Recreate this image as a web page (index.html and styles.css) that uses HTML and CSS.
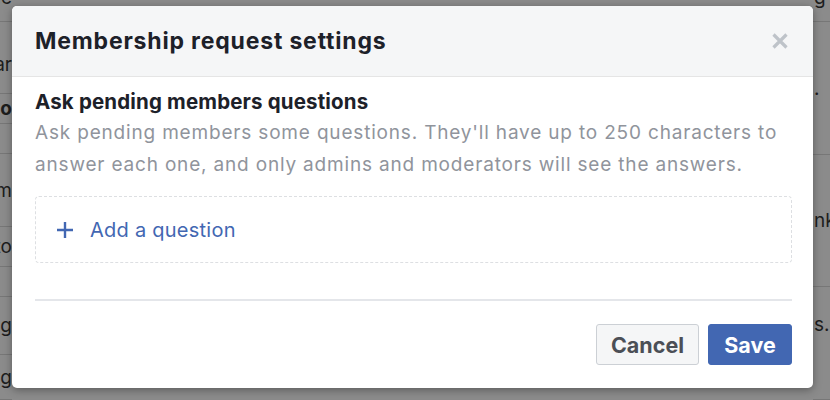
FILE: index.html
```html
<!DOCTYPE html>
<html lang="en">
<head>
<meta charset="utf-8">
<title>Membership request settings</title>
<link rel="stylesheet" href="styles.css">
</head>
<body>
<div class="page">
  <div class="strip strip-left">
    <div class="bg-row h22"><span>people</span></div>
    <div class="bg-row h72 bottom"><span>Clear</span></div>
    <div class="bg-row h30 bottom"><span class="bold">Hello</span></div>
    <div class="bg-row h30"><span></span></div>
    <div class="bg-row h73 bottom"><span>Lorem</span></div>
    <div class="bg-row h40"><span>Auto</span></div>
    <div class="bg-row h30"><span></span></div>
    <div class="bg-row h58 bottom"><span>Add g</span></div>
    <div class="bg-row h45 bottom"><span>Setting</span></div>
  </div>
  <div class="middle"></div>
  <div class="strip strip-right">
    <div class="bg-row h22"><span>g</span></div>
    <div class="bg-row h133"><span>.</span></div>
    <div class="bg-row h132"><span>nk</span></div>
    <div class="bg-row h113 bottom"><span>s.</span></div>
  </div>
</div>

<div class="dialog" role="dialog" aria-labelledby="dlg-title">
  <div class="dlg-head">
    <h2 id="dlg-title" class="dlg-title">Membership request settings</h2>
    <button class="close-btn" aria-label="Close">
      <svg width="16" height="16" viewBox="0 0 16 16" aria-hidden="true">
        <path d="M1.5 1.5 L14.5 14.5 M14.5 1.5 L1.5 14.5" stroke="#bec3c9" stroke-width="3.2" stroke-linecap="butt" fill="none"/>
      </svg>
    </button>
  </div>
  <div class="dlg-body">
    <h3 class="section-title">Ask pending members questions</h3>
    <p class="section-desc">Ask pending members some questions. They'll have up to 250 characters to answer each one, and only admins and moderators will see the answers.</p>
    <div class="add-box">
      <svg class="plus" width="18" height="18" viewBox="0 0 18 18" aria-hidden="true">
        <path d="M9 1 V17 M1 9 H17" stroke="#4267b2" stroke-width="2.4" fill="none"/>
      </svg>
      <span class="add-label">Add a question</span>
    </div>
  </div>
  <div class="dlg-foot">
    <button class="btn btn-cancel">Cancel</button>
    <button class="btn btn-save">Save</button>
  </div>
</div>
</body>
</html>
```

FILE: styles.css
```css
* { box-sizing: border-box; }

html, body {
  margin: 0;
  padding: 0;
  width: 830px;
  height: 400px;
  overflow: hidden;
  background: #8b8b8b;
  font-family: Inter, "Liberation Sans", Arial, sans-serif;
}

.page {
  display: flex;
  width: 830px;
  height: 400px;
}

.strip {
  display: flex;
  flex-direction: column;
  overflow: hidden;
}

.strip-left { width: 12px; }
.strip-right { width: 17px; }
.middle { flex: 1; }

.bg-row {
  display: flex;
  align-items: center;
  border-bottom: 1px solid #777;
  font-size: 19px;
  color: #1d1d1d;
  white-space: nowrap;
}

.strip-left .bg-row { justify-content: flex-end; }
.strip-right .bg-row { justify-content: flex-start; padding-left: 1px; }

.bg-row .bold { font-weight: bold; }

.h22 { height: 22px; align-items: flex-start; }
.h22 span { margin-top: -14px; }
.h72 { height: 72px; }
.h72 span { margin-top: 14px; }
.h30 { height: 30px; }
.h73 { height: 73px; }
.h40 { height: 40px; }
.h58 { height: 58px; }
.h45 { height: 45px; }
.h133 { height: 133px; }
.h132 { height: 132px; }
.h113 { height: 113px; align-items: flex-start; }
.h113 span { margin-top: 26px; }

.dialog {
  position: absolute;
  left: 12px;
  top: 6px;
  width: 801px;
  height: 382px;
  background: #fff;
  border-radius: 5px;
  overflow: hidden;
  box-shadow: 0 2px 8px rgba(0, 0, 0, 0.35);
  display: flex;
  flex-direction: column;
}

.dlg-head {
  height: 71px;
  background: #f5f6f7;
  border-bottom: 1px solid #e5e5e5;
  display: flex;
  align-items: center;
  justify-content: space-between;
  padding: 0 25px 0 23px;
}

.dlg-title {
  margin: 0;
  font-size: 23px;
  letter-spacing: 0.82px;
  font-weight: 700;
  color: #1d2129;
}

.close-btn {
  border: 0;
  background: transparent;
  padding: 0;
  width: 16px;
  height: 16px;
  display: flex;
}

.dlg-body {
  padding: 13px 21px 0 23px;
}

.section-title {
  margin: 0;
  font-size: 20.5px;
  letter-spacing: 0.15px;
  line-height: 24px;
  font-weight: 700;
  color: #1d2129;
}

.section-desc {
  margin: 3px 0 0;
  font-size: 19px;
  letter-spacing: 0.82px;
  line-height: 32px;
  color: #90949c;
}

.add-box {
  margin-top: 15px;
  height: 67px;
  border: 1px dashed #dddfe2;
  border-radius: 4px;
  display: flex;
  align-items: center;
  padding-left: 20px;
  gap: 16px;
}

.add-label {
  font-size: 20px;
  letter-spacing: 0.25px;
  color: #4267b2;
}

.dlg-foot {
  margin: 36px 21px 0 23px;
  border-top: 2px solid #e4e6ea;
  padding-top: 23px;
  display: flex;
  justify-content: flex-end;
  gap: 9px;
}

.btn {
  height: 41px;
  border-radius: 3px;
  font-family: Inter, "Liberation Sans", Arial, sans-serif;
  font-size: 21.5px;
  font-weight: 700;
  padding: 0;
}

.btn-cancel {
  width: 103px;
  background: #f5f6f7;
  border: 1px solid #ccd0d5;
  color: #4b4f56;
}

.btn-save {
  width: 84px;
  background: #4267b2;
  border: 1px solid #4267b2;
  color: #fff;
}
```
